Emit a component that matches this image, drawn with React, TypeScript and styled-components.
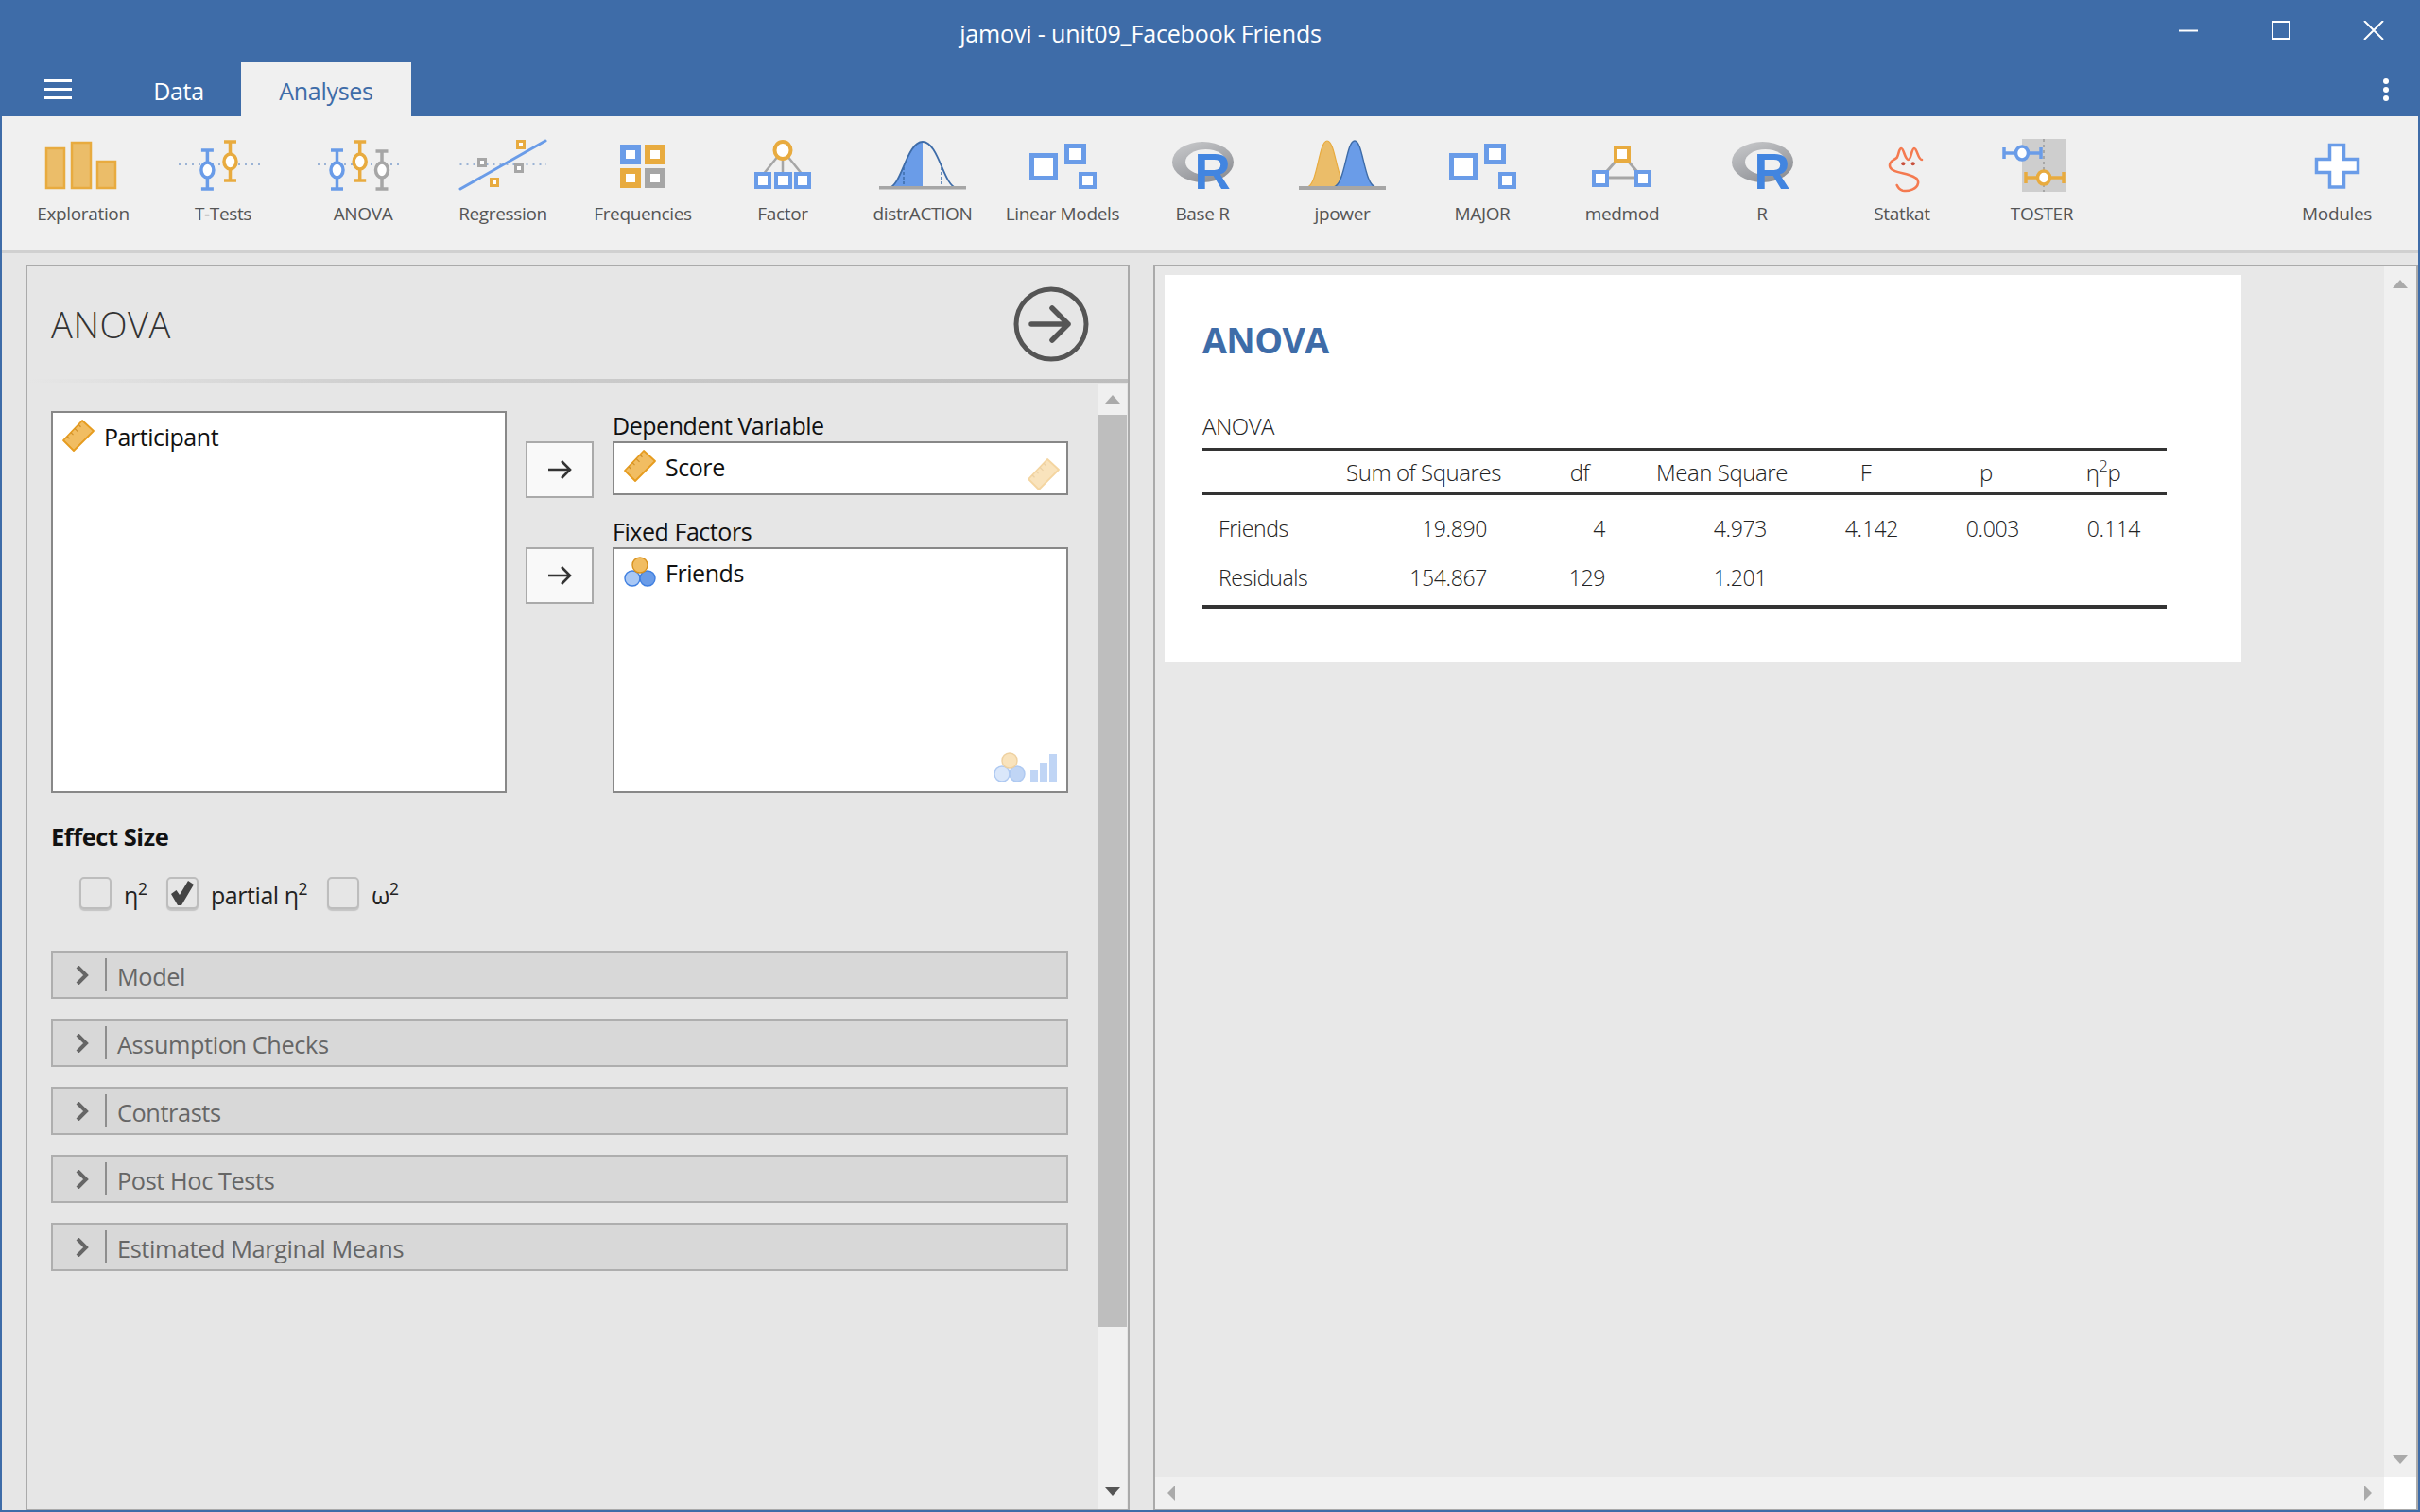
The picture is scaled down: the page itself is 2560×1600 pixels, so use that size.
import React from 'react'
import styled, { createGlobalStyle } from 'styled-components'

const BLUE = '#6a9ce8'
const ORANGE = '#e8ab3f'
const GREY = '#a6a6a6'
const FONT = '"Open Sans", "Noto Sans", sans-serif'

const GlobalStyle = createGlobalStyle`
  html, body {
    margin: 0;
    padding: 0;
    background: #3e6ca8;
  }
  * {
    box-sizing: border-box;
  }
  sup {
    font-size: 70%;
    line-height: 0;
    vertical-align: 0.6em;
  }
`

const Window = styled.div`
  display: flex;
  flex-direction: column;
  width: 2560px;
  height: 1600px;
  overflow: hidden;
  background: #3e6ca8;
  font-family: ${FONT};
  color: #111;
`

/* title bar */
const TitleRow = styled.div`
  display: flex;
  height: 66px;
  padding-left: 147px;
  color: #fff;
`
const TitleText = styled.div`
  flex: 1;
  text-align: center;
  font-size: 25px;
  letter-spacing: -0.15px;
  line-height: 71px;
`
const WinButton = styled.div`
  display: flex;
  justify-content: center;
  width: 98px;
  padding-top: 22px;
`
const TabRow = styled.div`
  display: flex;
  height: 57px;
  color: #fff;
`
const MenuButton = styled.div`
  display: flex;
  align-items: center;
  justify-content: center;
  width: 123px;
`
const Tab = styled.div<{ $active?: boolean; $w: number }>`
  width: ${(p) => p.$w}px;
  text-align: center;
  font-size: 25px;
  letter-spacing: -0.3px;
  line-height: 60px;
  background: ${(p) => (p.$active ? '#f0f0f0' : 'transparent')};
  color: ${(p) => (p.$active ? '#3e6ca8' : '#fff')};
`
const MoreButton = styled.div`
  display: flex;
  align-items: center;
  justify-content: center;
  width: 72px;
  margin-left: auto;
`

/* ribbon */
const Ribbon = styled.div`
  display: flex;
  height: 145px;
  margin: 0 2px;
  padding: 22px 12px 0;
  background: #f0f0f0;
  border-bottom: 3px solid #d0d0d0;
`
const ToolButton = styled.div<{ $end?: boolean }>`
  display: flex;
  flex-direction: column;
  align-items: center;
  width: 148px;
  margin-left: ${(p) => (p.$end ? 'auto' : '0')};
`
const ToolIcon = styled.svg`
  display: block;
  width: 100px;
  height: 68px;
`
const ToolLabel = styled.div`
  margin-top: 1px;
  font-size: 19px;
  letter-spacing: -0.35px;
  line-height: 24px;
  color: #555;
  white-space: nowrap;
`

/* main area */
const Main = styled.div`
  flex: 1;
  display: flex;
  min-height: 0;
  margin: 0 2px 2px;
  padding: 12px 0 0 25px;
  gap: 25px;
  background: #e6e6e6;
`
const OptionsPanel = styled.div`
  display: flex;
  flex-direction: column;
  width: 1168px;
  border: 2px solid #aaa;
  border-bottom-width: 1px;
  background: #e6e6e6;
`
const OptionsHeader = styled.div`
  position: relative;
  display: flex;
  align-items: center;
  justify-content: space-between;
  flex: none;
  height: 124px;
  padding: 0 41px 0 25px;
  &::after {
    content: '';
    position: absolute;
    left: 0;
    right: 0;
    bottom: 1px;
    height: 4px;
    background: linear-gradient(to right, #e6e6e6 0%, #d0d0d0 30%, #bdbdbd 100%);
  }
`
const PanelTitle = styled.div`
  font-size: 38px;
  font-weight: 300;
  letter-spacing: 0.6px;
  color: #333;
  margin-top: -2px;
`
const RunIcon = styled.svg`
  display: block;
  width: 80px;
  height: 80px;
  margin-top: -3px;
`
const OptionsBody = styled.div`
  flex: 1;
  display: flex;
  min-height: 0;
`
const OptionsContent = styled.div`
  flex: 1;
  padding: 29px 31px 0 25px;
`

/* variable supplier */
const Supplier = styled.div`
  display: grid;
  grid-template-columns: 482px 1fr;
  gap: 20px;
  height: 404px;
`
const VarList = styled.div<{ $h?: number }>`
  position: relative;
  height: ${(p) => (p.$h ? `${p.$h}px` : '100%')};
  padding: 7px 10px;
  background: #fff;
  border: 2px solid #888;
`
const VarRow = styled.div`
  display: flex;
  align-items: center;
  gap: 10px;
  height: 34px;
  font-size: 25px;
  letter-spacing: -0.45px;
  color: #111;
`
const VarName = styled.span`
  margin-top: 2px;
`
const Targets = styled.div`
  display: flex;
  flex-direction: column;
`
const TargetRow = styled.div`
  display: grid;
  grid-template-columns: 72px 482px;
  column-gap: 20px;
`
const ArrowCell = styled.div<{ $top: number }>`
  padding-top: ${(p) => p.$top}px;
`
const ArrowButton = styled.div`
  display: flex;
  align-items: center;
  justify-content: center;
  width: 72px;
  height: 60px;
  background: #f9f9f9;
  border: 2px solid #aaa;
`
const TargetLabel = styled.div<{ $top?: number }>`
  height: 32px;
  margin-top: ${(p) => p.$top ?? 0}px;
  font-size: 25px;
  letter-spacing: -0.45px;
  line-height: 30px;
  white-space: nowrap;
`
const Hint = styled.div<{ $right: number; $bottom: number }>`
  position: absolute;
  right: ${(p) => p.$right}px;
  bottom: ${(p) => p.$bottom}px;
  display: flex;
  align-items: flex-end;
  gap: 5px;
  opacity: 0.42;
`

const SectionTitle = styled.div`
  margin-top: 30px;
  font-size: 25.5px;
  font-weight: 700;
  letter-spacing: -0.45px;
  line-height: 32px;
`
const CheckRow = styled.div`
  display: flex;
  align-items: center;
  height: 34px;
  margin-top: 27px;
  padding-left: 30px;
`
const CheckBox = styled.div`
  display: flex;
  align-items: center;
  justify-content: center;
  flex: none;
  width: 34px;
  height: 34px;
  background: #e6e6e6;
  border: 2px solid #bdbdbd;
  border-radius: 5px;
  box-shadow: 0 2px 1px #c4c4c4;
`
const CheckLabel = styled.div<{ $w: number }>`
  flex: none;
  width: ${(p) => p.$w}px;
  margin: 3px 0 0 13px;
  font-size: 25px;
  letter-spacing: -0.45px;
  color: #222;
  white-space: nowrap;
`
const Sections = styled.div`
  display: flex;
  flex-direction: column;
  gap: 21px;
  margin-top: 44px;
`
const Section = styled.div`
  display: flex;
  align-items: center;
  height: 51px;
  background: #d8d8d8;
  border: 2px solid #aeaeae;
`
const Chevron = styled.div`
  display: flex;
  justify-content: center;
  align-items: center;
  width: 57px;
  height: 35px;
  padding-left: 7px;
  border-right: 2px solid #8e8e8e;
`
const SectionLabel = styled.div`
  margin: 2px 0 0 11px;
  font-size: 25.3px;
  letter-spacing: -0.4px;
  color: #666;
`

/* scroll bars */
const VScroll = styled.div`
  display: flex;
  flex-direction: column;
  flex: none;
  width: 31px;
  margin-right: 1px;
  background: #f0f0f0;
`
const ScrollEnd = styled.div<{ $h: number }>`
  display: flex;
  align-items: center;
  justify-content: center;
  flex: none;
  height: ${(p) => p.$h}px;
`
const Thumb = styled.div`
  flex: none;
  height: 965px;
  background: #bebebe;
`
const ScrollRest = styled.div`
  flex: 1;
  display: flex;
  align-items: flex-end;
  justify-content: center;
  padding-bottom: 14px;
`
const Tri = styled.svg`
  display: block;
`

/* results */
const ResultsPanel = styled.div`
  flex: 1;
  display: grid;
  grid-template-columns: 1fr 34px;
  grid-template-rows: 1fr 34px;
  border: 2px solid #aaa;
  border-bottom-width: 1px;
  min-width: 0;
  background: #e8e8e8;
`
const ResultsView = styled.div`
  padding: 9px 10px;
`
const ResultsVScroll = styled.div`
  display: flex;
  flex-direction: column;
  align-items: center;
  justify-content: space-between;
  padding: 14px 0 14px;
  background: #f0f0f0;
`
const ResultsHScroll = styled.div`
  display: flex;
  align-items: center;
  justify-content: space-between;
  padding: 0 13px;
  background: #f0f0f0;
`
const ScrollCorner = styled.div`
  background: #fff;
`
const ResultCard = styled.div`
  width: 1139px;
  height: 409px;
  padding: 44px 79px 0 40px;
  background: #fff;
`
const ResultHeading = styled.h1`
  margin: 0 0 51px;
  font-size: 37.5px;
  font-weight: 700;
  line-height: 50px;
  letter-spacing: -0.6px;
  color: #3e6ca8;
`
const TableTitle = styled.div`
  height: 30px;
  margin-bottom: 8px;
  font-size: 24px;
  font-weight: 300;
  letter-spacing: -0.45px;
  line-height: 30px;
  color: #222;
`
const AnovaTable = styled.table`
  width: 1020px;
  table-layout: fixed;
  border-collapse: collapse;
  border-top: 3px solid #333;
  border-bottom: 4px solid #333;
  font-size: 23px;
  font-weight: 300;
  letter-spacing: -0.35px;
  color: #222;
`
const HeadRow = styled.tr`
  height: 47px;
  border-bottom: 3px solid #333;
`
const Head = styled.th`
  padding: 0;
  font-size: 24px;
  font-weight: 300;
  letter-spacing: -0.45px;
  text-align: center;
`
const GapRow = styled.tr<{ $h: number }>`
  height: ${(p) => p.$h}px;
`
const BodyRow = styled.tr`
  height: 52px;
`
const RowName = styled.td`
  padding-left: 17px;
`
const Value = styled.td<{ $pad: number }>`
  padding: 0 ${(p) => p.$pad}px 0 0;
  text-align: right;
`

/* drawn icons */
const Whisker = ({ x, y1, y2, cy, c }: { x: number; y1: number; y2: number; cy: number; c: string }) => (
  <g stroke={c}>
    <line x1={x} y1={y1} x2={x} y2={y2} strokeWidth={3.5} />
    <line x1={x - 6.5} y1={y1} x2={x + 6.5} y2={y1} strokeWidth={3.5} />
    <line x1={x - 6.5} y1={y2} x2={x + 6.5} y2={y2} strokeWidth={3.5} />
    <ellipse cx={x} cy={cy} rx={6.5} ry={8} fill="#fff" strokeWidth={3.5} />
  </g>
)

const HWhisker = ({ x1, x2, y, cx, c }: { x1: number; x2: number; y: number; cx: number; c: string }) => (
  <g stroke={c}>
    <line x1={x1} y1={y} x2={x2} y2={y} strokeWidth={3.5} />
    <line x1={x1} y1={y - 6} x2={x1} y2={y + 6} strokeWidth={3.5} />
    <line x1={x2} y1={y - 6} x2={x2} y2={y + 6} strokeWidth={3.5} />
    <ellipse cx={cx} cy={y} rx={6.5} ry={7} fill="#fff" strokeWidth={3.5} />
  </g>
)

const Square = ({ x, y, w, h, c, sw = 4 }: { x: number; y: number; w: number; h: number; c: string; sw?: number }) => (
  <rect x={x + sw / 2} y={y + sw / 2} width={w - sw} height={h - sw} fill="#fff" stroke={c} strokeWidth={sw} />
)

const DotLine = ({ x1, x2 }: { x1: number; x2: number }) => (
  <line x1={x1} y1={29} x2={x2} y2={29} stroke="#7f9fcb" strokeWidth={1.5} strokeDasharray="2 5" />
)

const LinearModelsGlyph = () => (
  <>
    <Square x={15} y={17} w={30} h={29} c={BLUE} sw={5} />
    <Square x={52} y={7} w={23} h={22} c={BLUE} sw={5} />
    <Square x={67} y={37} w={19} h={18} c={BLUE} />
  </>
)

const RLogoGlyph = () => (
  <>
    <defs>
      <linearGradient id="ringGrey" x1="0" y1="0" x2="0.6" y2="1">
        <stop offset="0" stopColor="#cbccce" />
        <stop offset="1" stopColor="#8f9196" />
      </linearGradient>
    </defs>
    <ellipse cx={50.5} cy={26.5} rx={32.5} ry={21.5} fill="url(#ringGrey)" />
    <ellipse cx={53.5} cy={26.5} rx={21.5} ry={13.5} fill="#f0f0f0" />
    <text x={41.5} y={55} fontFamily='"Liberation Sans", sans-serif' fontWeight={700} fontSize={53} fill="#4285e0">
      R
    </text>
  </>
)

const icons: Record<string, React.ReactNode> = {
  Exploration: (
    <g fill="#ebbd69" stroke={ORANGE} strokeWidth={2.5}>
      <rect x={11} y={12} width={19} height={42} />
      <rect x={38} y={6} width={20} height={48} />
      <rect x={65} y={26} width={19} height={28} />
    </g>
  ),
  'T-Tests': (
    <>
      <DotLine x1={3} x2={93} />
      <Whisker x={33.4} y1={14} y2={55} cy={35} c={BLUE} />
      <Whisker x={57.5} y1={5} y2={46} cy={26} c={ORANGE} />
    </>
  ),
  ANOVA: (
    <>
      <DotLine x1={2} x2={93} />
      <Whisker x={22.5} y1={14} y2={55} cy={35} c={BLUE} />
      <Whisker x={46.7} y1={5} y2={46} cy={26} c={ORANGE} />
      <Whisker x={70} y1={15} y2={55} cy={35} c={GREY} />
    </>
  ),
  Regression: (
    <>
      <DotLine x1={4.5} x2={96} />
      <line x1={5} y1={55} x2={95} y2={4} stroke={BLUE} strokeWidth={3} strokeLinecap="round" />
      <Square x={64} y={3} w={10} h={10} c={ORANGE} sw={3} />
      <Square x={23} y={22} w={10} h={10} c={GREY} sw={3} />
      <Square x={62} y={28} w={10} h={10} c={GREY} sw={3} />
      <Square x={36} y={43} w={10} h={10} c={ORANGE} sw={3} />
    </>
  ),
  Frequencies: (
    <>
      <Square x={26} y={8} w={22} h={21} c={BLUE} sw={6} />
      <Square x={52} y={8} w={22} h={21} c={ORANGE} sw={6} />
      <Square x={26} y={33} w={22} h={21} c={ORANGE} sw={6} />
      <Square x={52} y={33} w={22} h={21} c={GREY} sw={6} />
    </>
  ),
  Factor: (
    <>
      <g stroke={GREY} strokeWidth={2.5}>
        <line x1={50} y1={14} x2={29} y2={40} />
        <line x1={50} y1={14} x2={50} y2={40} />
        <line x1={50} y1={14} x2={71} y2={40} />
      </g>
      <ellipse cx={50} cy={14} rx={8.5} ry={9} fill="#fff" stroke={ORANGE} strokeWidth={4} />
      <Square x={20} y={37} w={18} h={18} c={BLUE} />
      <Square x={41} y={37} w={19} h={18} c={BLUE} />
      <Square x={62} y={37} w={18} h={18} c={BLUE} />
    </>
  ),
  distrACTION: (
    <>
      <path d="M14 54 C28 52 33 5 50 5 L50 54 Z" fill={BLUE} />
      <path d="M14 54 C28 52 33 5 50 5 C67 5 72 52 86 54" fill="none" stroke="#3e6ca8" strokeWidth={1.8} />
      <line x1={30} y1={32} x2={30} y2={54} stroke="#3e6ca8" strokeWidth={1.5} strokeDasharray="3 2" />
      <line x1={70} y1={32} x2={70} y2={54} stroke="#3e6ca8" strokeWidth={1.5} strokeDasharray="3 2" />
      <rect x={4} y={52} width={92} height={3.5} fill={GREY} />
    </>
  ),
  'Linear Models': <LinearModelsGlyph />,
  'Base R': <RLogoGlyph />,
  jpower: (
    <>
      <path d="M13 53 C24 50 25 4 34 4 C43 4 44 50 56 53 Z" fill="#ebbd69" stroke={ORANGE} strokeWidth={1.2} />
      <path d="M41 53 C53 50 54 4 63 4 C72 4 73 50 85 53 Z" fill={BLUE} stroke="#3e6ca8" strokeWidth={1.4} />
      <rect x={4} y={52} width={92} height={4} fill={GREY} />
    </>
  ),
  MAJOR: <LinearModelsGlyph />,
  medmod: (
    <>
      <g stroke={GREY} strokeWidth={3}>
        <line x1={50} y1={18} x2={27} y2={44} />
        <line x1={50} y1={18} x2={72} y2={44} />
        <line x1={27} y1={43} x2={72} y2={43} />
      </g>
      <Square x={41} y={9} w={18} h={18} c={ORANGE} />
      <Square x={18} y={35} w={18} h={18} c={BLUE} />
      <Square x={63} y={35} w={18} h={18} c={BLUE} />
    </>
  ),
  R: <RLogoGlyph />,
  Statkat: (
    <>
      <path
        d="M71 24 C67 24 66 12 63 12 C60 12 60 24 56.7 24 C53 24 52 12 49.3 12 C46.5 12 47 18 44.7 21.7 C41 25 37 25 37 30 C37 36 46 37 57 40 C64 42 68 45 67 49 C66 55 57 58 50.7 56.7 C48 56 46 54 44.7 51"
        fill="none"
        stroke="#f47a50"
        strokeWidth={2.6}
        strokeLinecap="round"
      />
      <circle cx={51.3} cy={28.3} r={2} fill="#c8503c" />
      <circle cx={61.7} cy={28.3} r={2} fill="#c8503c" />
    </>
  ),
  TOSTER: (
    <>
      <rect x={29} y={2} width={46} height={56} fill="#cecece" />
      <line x1={52} y1={2} x2={52} y2={58} stroke="#9a9a9a" strokeWidth={1.5} strokeDasharray="3 3" />
      <HWhisker x1={10} x2={49} y={17} cx={29} c={BLUE} />
      <HWhisker x1={33} x2={73} y={43} cx={52} c={ORANGE} />
    </>
  ),
  Modules: (
    <path
      d="M42.5 8.5 H57.5 V23.5 H72.5 V37.5 H57.5 V53 H42.5 V37.5 H28.5 V23.5 H42.5 Z"
      fill="#fff"
      stroke={BLUE}
      strokeWidth={3.5}
    />
  ),
}

const tools = Object.keys(icons).filter((name) => name !== 'Modules')

const Tool = ({ name, end }: { name: string; end?: boolean }) => (
  <ToolButton $end={end}>
    <ToolIcon viewBox="0 0 100 68">{icons[name]}</ToolIcon>
    <ToolLabel>{name}</ToolLabel>
  </ToolButton>
)

const Ruler = () => (
  <svg width={34} height={34} viewBox="0 0 34 34">
    <polygon points="21,1 33,12 12,33 1,22" fill="#f1bd62" stroke="#e69c1f" strokeWidth={1.8} strokeLinejoin="round" />
    <g stroke="#d0902a" strokeWidth={1.3}>
      <line x1={17} y1={5.2} x2={19.5} y2={7.7} />
      <line x1={13} y1={9.4} x2={16.5} y2={12.9} />
      <line x1={9} y1={13.6} x2={11.5} y2={16.1} />
      <line x1={5} y1={17.8} x2={7.5} y2={20.3} />
    </g>
  </svg>
)

const Nominal = () => (
  <svg width={34} height={32} viewBox="0 0 34 32">
    <circle cx={9} cy={23} r={8} fill="#a9c8f5" stroke="#3f7fe0" strokeWidth={1.4} />
    <circle cx={25} cy={23} r={8} fill="#6a9ce8" stroke="#3f7fe0" strokeWidth={1.4} />
    <circle cx={17} cy={9} r={8} fill="#f1bd62" stroke="#d8921f" strokeWidth={1.4} />
  </svg>
)

const Bars = () => (
  <svg width={28} height={30} viewBox="0 0 28 30">
    <g fill="#6a9ce8">
      <rect x={0} y={17} width={8} height={13} />
      <rect x={10} y={9} width={8} height={21} />
      <rect x={20} y={0} width={8} height={30} />
    </g>
  </svg>
)

const SmallArrow = () => (
  <svg width={26} height={22} viewBox="0 0 26 22">
    <path d="M1 11 H24 M15 2 L24 11 L15 20" fill="none" stroke="#333" strokeWidth={2.6} />
  </svg>
)

const ChevronIcon = () => (
  <svg width={14} height={20} viewBox="0 0 14 20">
    <path d="M2 1 L11 10 L2 19" fill="none" stroke="#666" strokeWidth={4} />
  </svg>
)

const TriUp = ({ c = '#aaa' }: { c?: string }) => (
  <Tri width={16} height={9} viewBox="0 0 16 9">
    <polygon points="8,0 16,9 0,9" fill={c} />
  </Tri>
)
const TriDown = ({ c = '#aaa' }: { c?: string }) => (
  <Tri width={16} height={9} viewBox="0 0 16 9">
    <polygon points="0,0 16,0 8,9" fill={c} />
  </Tri>
)
const TriLeft = () => (
  <Tri width={8} height={16} viewBox="0 0 8 16">
    <polygon points="8,0 8,16 0,8" fill="#aaa" />
  </Tri>
)
const TriRight = () => (
  <Tri width={8} height={16} viewBox="0 0 8 16">
    <polygon points="0,0 8,8 0,16" fill="#aaa" />
  </Tri>
)

const sections = ['Model', 'Assumption Checks', 'Contrasts', 'Post Hoc Tests', 'Estimated Marginal Means']

const columns = [138, 192, 138, 163, 141, 114, 134]

const App = () => (
  <Window>
    <GlobalStyle />
    <TitleRow>
      <TitleText>jamovi - unit09_Facebook Friends</TitleText>
      <WinButton>
        <svg width={22} height={20} viewBox="0 0 22 20">
          <line x1={1} y1={10.5} x2={21} y2={10.5} stroke="#fff" strokeWidth={2} />
        </svg>
      </WinButton>
      <WinButton>
        <svg width={20} height={20} viewBox="0 0 20 20">
          <rect x={1} y={1} width={18} height={18} fill="none" stroke="#fff" strokeWidth={2} />
        </svg>
      </WinButton>
      <WinButton>
        <svg width={22} height={20} viewBox="0 0 22 20">
          <path d="M1 0 L21 20 M21 0 L1 20" stroke="#fff" strokeWidth={2} />
        </svg>
      </WinButton>
    </TitleRow>
    <TabRow>
      <MenuButton>
        <svg width={29} height={21} viewBox="0 0 29 21">
          <path d="M0 1.5 H29 M0 10.5 H29 M0 19.5 H29" stroke="#fff" strokeWidth={3} />
        </svg>
      </MenuButton>
      <Tab $w={132}>Data</Tab>
      <Tab $w={180} $active>
        Analyses
      </Tab>
      <MoreButton>
        <svg width={6} height={24} viewBox="0 0 6 24">
          <circle cx={3} cy={3} r={3} fill="#fff" />
          <circle cx={3} cy={12} r={3} fill="#fff" />
          <circle cx={3} cy={21} r={3} fill="#fff" />
        </svg>
      </MoreButton>
    </TabRow>
    <Ribbon>
      {tools.map((name) => (
        <Tool key={name} name={name} />
      ))}
      <Tool name="Modules" end />
    </Ribbon>
    <Main>
      <OptionsPanel>
        <OptionsHeader>
          <PanelTitle>ANOVA</PanelTitle>
          <RunIcon viewBox="0 0 80 80">
            <circle cx={40} cy={40} r={37} fill="none" stroke="#555" strokeWidth={5} />
            <path
              d="M19 40 H58 M41 23 L58 40 L41 57"
              fill="none"
              stroke="#555"
              strokeWidth={5.5}
              strokeLinecap="round"
              strokeLinejoin="round"
            />
          </RunIcon>
        </OptionsHeader>
        <OptionsBody>
          <OptionsContent>
            <Supplier>
              <VarList>
                <VarRow>
                  <Ruler />
                  <VarName>Participant</VarName>
                </VarRow>
              </VarList>
              <Targets>
                <TargetRow>
                  <ArrowCell $top={32}>
                    <ArrowButton>
                      <SmallArrow />
                    </ArrowButton>
                  </ArrowCell>
                  <div>
                    <TargetLabel>Dependent Variable</TargetLabel>
                    <VarList $h={57}>
                      <VarRow>
                        <Ruler />
                        <VarName>Score</VarName>
                      </VarRow>
                      <Hint $right={7} $bottom={3}>
                        <Ruler />
                      </Hint>
                    </VarList>
                  </div>
                </TargetRow>
                <TargetRow>
                  <ArrowCell $top={52}>
                    <ArrowButton>
                      <SmallArrow />
                    </ArrowButton>
                  </ArrowCell>
                  <div>
                    <TargetLabel $top={20}>Fixed Factors</TargetLabel>
                    <VarList $h={260}>
                      <VarRow>
                        <Nominal />
                        <VarName>Friends</VarName>
                      </VarRow>
                      <Hint $right={10} $bottom={9}>
                        <Nominal />
                        <Bars />
                      </Hint>
                    </VarList>
                  </div>
                </TargetRow>
              </Targets>
            </Supplier>
            <SectionTitle>Effect Size</SectionTitle>
            <CheckRow>
              <CheckBox />
              <CheckLabel $w={45}>
                η<sup>2</sup>
              </CheckLabel>
              <CheckBox>
                <svg width={26} height={28} viewBox="0 0 26 28">
                  <path d="M1 15 L6.5 11 L10 16 L19 1 L25 5 L12 27 L8 27 Z" fill="#444" />
                </svg>
              </CheckBox>
              <CheckLabel $w={123}>
                partial η<sup>2</sup>
              </CheckLabel>
              <CheckBox />
              <CheckLabel $w={60}>
                ω<sup>2</sup>
              </CheckLabel>
            </CheckRow>
            <Sections>
              {sections.map((label) => (
                <Section key={label}>
                  <Chevron>
                    <ChevronIcon />
                  </Chevron>
                  <SectionLabel>{label}</SectionLabel>
                </Section>
              ))}
            </Sections>
          </OptionsContent>
          <VScroll>
            <ScrollEnd $h={33}>
              <TriUp />
            </ScrollEnd>
            <Thumb />
            <ScrollRest>
              <TriDown c="#555" />
            </ScrollRest>
          </VScroll>
        </OptionsBody>
      </OptionsPanel>
      <ResultsPanel>
        <ResultsView>
          <ResultCard>
            <ResultHeading>ANOVA</ResultHeading>
            <TableTitle>ANOVA</TableTitle>
            <AnovaTable>
              <colgroup>
                {columns.map((w, i) => (
                  <col key={i} width={w} />
                ))}
              </colgroup>
              <thead>
                <HeadRow>
                  <Head />
                  <Head>Sum of Squares</Head>
                  <Head>df</Head>
                  <Head>Mean Square</Head>
                  <Head>F</Head>
                  <Head>p</Head>
                  <Head>
                    η<sup>2</sup>p
                  </Head>
                </HeadRow>
              </thead>
              <tbody>
                <GapRow $h={10} />
                <BodyRow>
                  <RowName>Friends</RowName>
                  <Value $pad={29}>19.890</Value>
                  <Value $pad={42}>4</Value>
                  <Value $pad={34}>4.973</Value>
                  <Value $pad={36}>4.142</Value>
                  <Value $pad={22}>0.003</Value>
                  <Value $pad={28}>0.114</Value>
                </BodyRow>
                <BodyRow>
                  <RowName>Residuals</RowName>
                  <Value $pad={29}>154.867</Value>
                  <Value $pad={42}>129</Value>
                  <Value $pad={34}>1.201</Value>
                  <Value $pad={36} />
                  <Value $pad={22} />
                  <Value $pad={28} />
                </BodyRow>
                <GapRow $h={5} />
              </tbody>
            </AnovaTable>
          </ResultCard>
        </ResultsView>
        <ResultsVScroll>
          <TriUp />
          <TriDown />
        </ResultsVScroll>
        <ResultsHScroll>
          <TriLeft />
          <TriRight />
        </ResultsHScroll>
        <ScrollCorner />
      </ResultsPanel>
    </Main>
  </Window>
)

export default App
